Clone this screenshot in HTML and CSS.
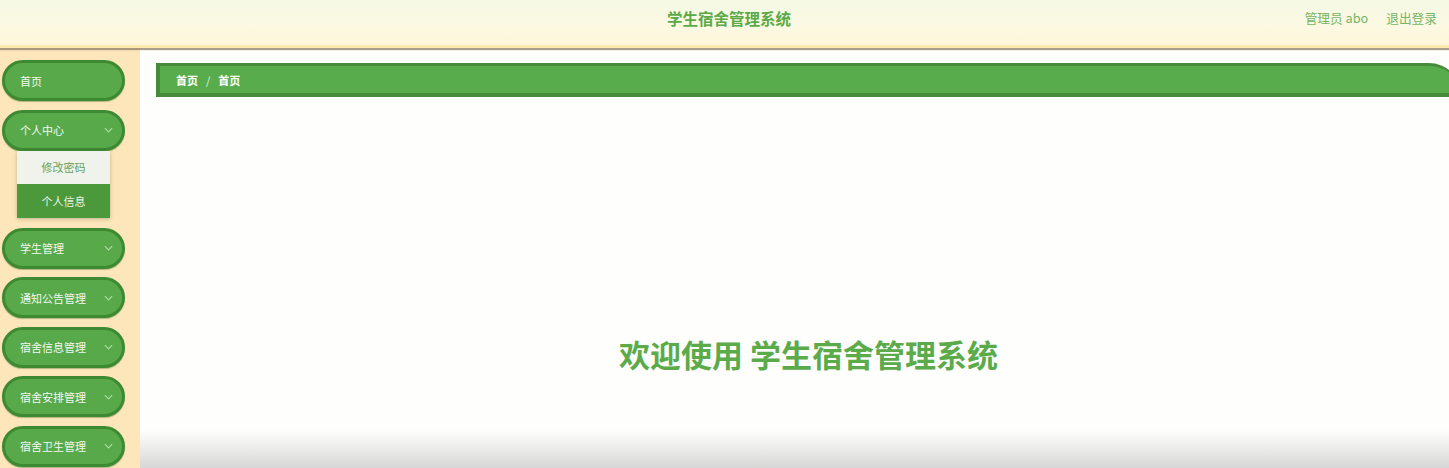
FILE: index.html
```html
<!DOCTYPE html>
<html lang="zh">
<head>
<meta charset="utf-8">
<title>学生宿舍管理系统</title>
<link rel="stylesheet" href="styles.css">
</head>
<body>
<div class="page">
  <header class="topbar">
    <div class="title">学生宿舍管理系统</div>
    <div class="user">
      <span class="user-name">管理员 abo</span>
      <span class="logout">退出登录</span>
    </div>
  </header>
  <div class="body">
    <nav class="sidebar">
      <div class="menu-item"><span>首页</span></div>
      <div class="menu-item open"><span>个人中心</span><svg class="chev" viewBox="0 0 10 6"><path d="M1 1l4 4 4-4"/></svg></div>
      <div class="submenu">
        <div class="sub-item">修改密码</div>
        <div class="sub-item active">个人信息</div>
      </div>
      <div class="menu-item"><span>学生管理</span><svg class="chev" viewBox="0 0 10 6"><path d="M1 1l4 4 4-4"/></svg></div>
      <div class="menu-item"><span>通知公告管理</span><svg class="chev" viewBox="0 0 10 6"><path d="M1 1l4 4 4-4"/></svg></div>
      <div class="menu-item"><span>宿舍信息管理</span><svg class="chev" viewBox="0 0 10 6"><path d="M1 1l4 4 4-4"/></svg></div>
      <div class="menu-item"><span>宿舍安排管理</span><svg class="chev" viewBox="0 0 10 6"><path d="M1 1l4 4 4-4"/></svg></div>
      <div class="menu-item"><span>宿舍卫生管理</span><svg class="chev" viewBox="0 0 10 6"><path d="M1 1l4 4 4-4"/></svg></div>
    </nav>
    <main class="main">
      <div class="breadcrumb">
        <span>首页</span><span class="sep">/</span><span>首页</span>
      </div>
      <div class="welcome">欢迎使用 学生宿舍管理系统</div>
    </main>
  </div>
</div>
</body>
</html>
```
FILE: styles.css
```css
* { box-sizing: border-box; }
html, body { margin: 0; padding: 0; }
body {
  font-family: "Noto Sans CJK SC", "Noto Sans", sans-serif;
  background: #fefefc;
  overflow: hidden;
}
.page {
  width: 1449px;
  height: 468px;
  display: flex;
  flex-direction: column;
  overflow: hidden;
}
.topbar {
  height: 48px;
  flex: none;
  position: relative;
  z-index: 2;
  display: flex;
  align-items: center;
  justify-content: center;
  background: linear-gradient(to bottom, #f5f9e5 0%, #fcf9e2 60%, #fdf6da 100%);
  border-bottom: 3px solid #fce9ad;
  box-shadow: 0 2px 1px rgba(140, 125, 105, 0.75);
}
.title {
  font-size: 15.5px;
  font-weight: 700;
  color: #5aaa48;
  margin-left: 9px;
  margin-top: -10px;
}
.user {
  position: absolute;
  right: 12px;
  top: 8px;
  display: flex;
  gap: 18px;
  font-size: 12.7px;
  color: #76b565;
}
.body {
  flex: 1;
  display: flex;
  min-height: 0;
}
.sidebar {
  width: 140px;
  flex: none;
  background: #fde7ba;
  padding: 12px 0 0 2px;
  display: flex;
  flex-direction: column;
}
.menu-item {
  width: 123px;
  height: 41px;
  flex: none;
  margin-bottom: 8.5px;
  border: 3px solid #3e8a32;
  border-radius: 21px;
  background: #57a94a;
  display: flex;
  align-items: center;
  justify-content: space-between;
  padding: 0 9px 0 15px;
  color: #f3f8ef;
  font-size: 11px;
  box-shadow: 0 1px 1px rgba(60, 110, 40, 0.4);
}
.menu-item.open { margin-bottom: 0; }
.chev {
  width: 9px;
  height: 6px;
  fill: none;
  stroke: #a9dca0;
  stroke-width: 1.3;
}
.submenu {
  width: 93px;
  margin: 0 0 10px 15px;
  box-shadow: 0 1px 4px rgba(80, 80, 60, 0.35);
  display: flex;
  flex-direction: column;
}
.sub-item {
  height: 33.5px;
  display: flex;
  align-items: center;
  justify-content: center;
  font-size: 11px;
  background: #eff3ec;
  color: #6c9f60;
}
.sub-item.active {
  background: #4b993b;
  color: #eaf3e4;
}
.main {
  flex: 1;
  min-width: 0;
  padding: 15px 0 0 16px;
  margin-right: -12px;
  display: flex;
  flex-direction: column;
  background: linear-gradient(to bottom, #fefefc 0%, #fefefc 91%, #f1f1ee 94%, #e2e2e0 97.5%, #d6d6d6 100%);
}
.breadcrumb {
  height: 34px;
  flex: none;
  background: #58ac4c;
  border: 4px solid #478c3a;
  border-top-width: 3px;
  border-right: none;
  border-top-right-radius: 32px;
  display: flex;
  align-items: center;
  padding-left: 16px;
  font-size: 11px;
  font-weight: 700;
  color: #ffffff;
}
.breadcrumb .sep {
  margin: 0 8px;
  font-weight: 400;
  color: #e6f1e0;
}
.welcome {
  margin-top: 235px;
  height: 44px;
  line-height: 44px;
  text-align: center;
  font-size: 31px;
  font-weight: 700;
  color: #5bab4a;
}
```
